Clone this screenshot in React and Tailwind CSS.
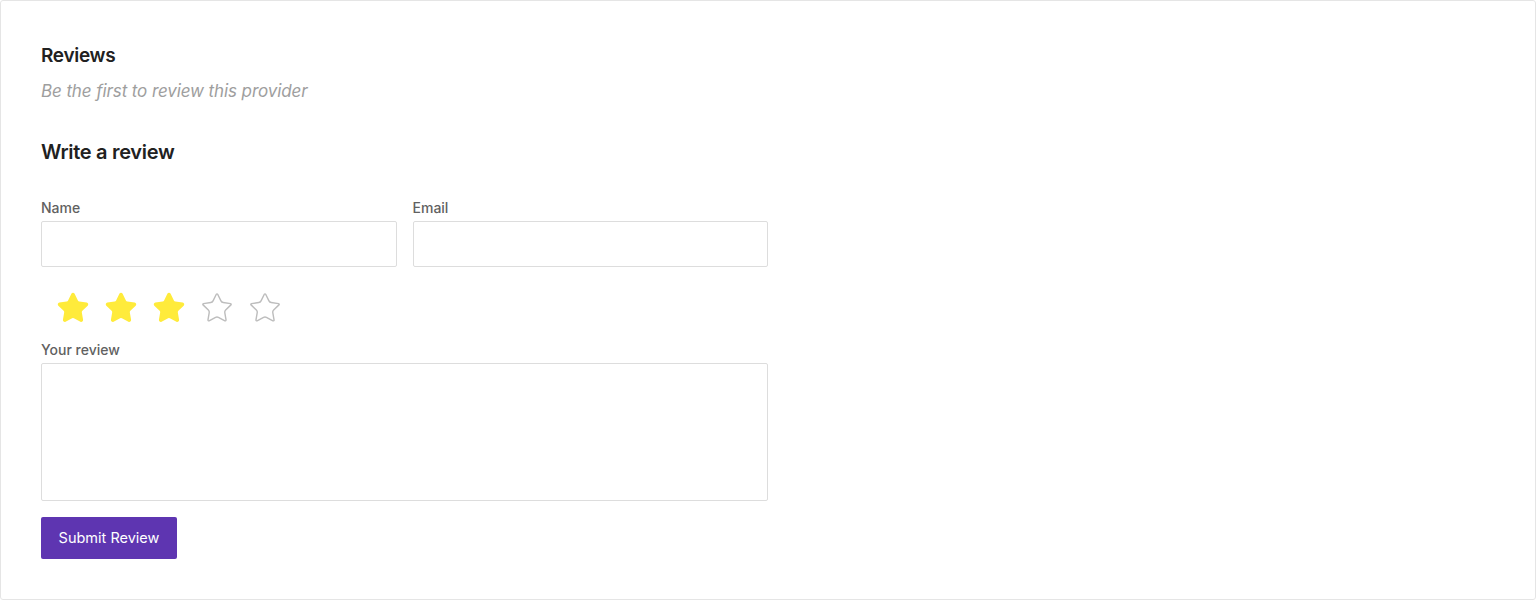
import React from "react";

function Star({ filled }) {
  return (
    <svg width="34" height="34" viewBox="0 0 24 24" fill={filled ? "#ffeb3b" : "none"} stroke={filled ? "#ffeb3b" : "#bdbdbd"} strokeWidth={filled ? 1.5 : 1} strokeLinejoin="round" strokeLinecap="round">
      <path d="M11.525 2.295a.53.53 0 0 1 .95 0l2.31 4.679a2.123 2.123 0 0 0 1.595 1.16l5.166.756a.53.53 0 0 1 .294.904l-3.736 3.638a2.123 2.123 0 0 0-.611 1.878l.882 5.14a.53.53 0 0 1-.771.56l-4.618-2.428a2.122 2.122 0 0 0-1.973 0L6.396 21.01a.53.53 0 0 1-.77-.56l.881-5.139a2.122 2.122 0 0 0-.611-1.879L2.16 9.795a.53.53 0 0 1 .294-.906l5.165-.755a2.122 2.122 0 0 0 1.597-1.16z" />
    </svg>
  );
}

export default function App() {
  const font = { fontFamily: "Inter, 'Liberation Sans', sans-serif" };
  return (
    <div className="w-[1536px] h-[600px] bg-white" style={font}>
      <div className="h-full border border-[#e5e5e5] rounded-[3px] pl-10 pt-[42px]">
        <h2 className="text-[19px] leading-[26px] font-semibold text-[#212121] tracking-[-0.3px]">Reviews</h2>
        <p className="mt-[10px] text-[17px] leading-[24px] italic text-[#9e9e9e] tracking-[-0.1px]">Be the first to review this provider</p>
        <h3 className="mt-[35px] text-[20px] leading-[28px] font-semibold text-[#212121] tracking-[-0.3px]">Write a review</h3>
        <div className="w-[727px] mt-[33px]">
          <div className="flex gap-4">
            <div className="flex-1">
              <label className="block text-[14px] leading-[18px] font-medium text-[#616161]">Name</label>
              <input className="mt-[4px] block w-full h-[46px] border border-[#dddddd] rounded-[2px] bg-white" />
            </div>
            <div className="flex-1">
              <label className="block text-[14px] leading-[18px] font-medium text-[#616161]">Email</label>
              <input className="mt-[4px] block w-full h-[46px] border border-[#dddddd] rounded-[2px] bg-white" />
            </div>
          </div>
          <div className="flex gap-[14px] pl-[15px] mt-[24px] h-[34px] items-center">
            <Star filled />
            <Star filled />
            <Star filled />
            <Star />
            <Star />
          </div>
          <label className="mt-[16px] block text-[14px] leading-[18px] font-medium text-[#616161]">Your review</label>
          <textarea className="mt-[4px] block w-full h-[138px] border border-[#dddddd] rounded-[2px] resize-none bg-white" />
          <button className="mt-[16px] h-[42px] w-[136px] bg-[#5e35b1] text-white text-[14.5px] rounded-[2px]">Submit Review</button>
        </div>
      </div>
    </div>
  );
}
